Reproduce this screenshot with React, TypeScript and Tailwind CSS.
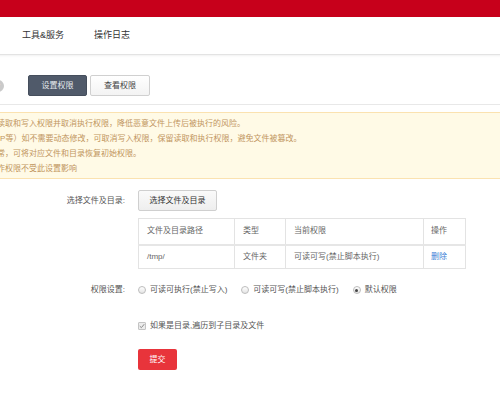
export default function App() {
  const navItems = ["安全", "工具&服务", "操作日志"]
  const tips = [
    "建议设置为读取和写入权限并取消执行权限，降低恶意文件上传后被执行的风险。",
    "脚本（如PHP等）如不需要动态修改，可取消写入权限，保留读取和执行权限，避免文件被篡改。",
    "修改后若异常，可将对应文件和目录恢复初始权限。",
    "系统文件操作权限不受此设置影响",
  ]
  const radios = [
    { label: "可读可执行(禁止写入)", checked: false },
    { label: "可读可写(禁止脚本执行)", checked: false },
    { label: "默认权限", checked: true },
  ]

  return (
    <div className="w-[500px] h-[400px] overflow-hidden bg-white font-['Liberation_Sans','Noto_Sans_CJK_SC',sans-serif]">
      {/* page is scrolled right: left part off-screen */}
      <div className="-ml-[100px] w-[700px]">
        <div className="h-[17px] bg-[#c7001b]" />

        <nav className="h-[38px] flex items-center pl-[59px] text-[9px] text-[#333] border-b border-[#e3e3e3] shadow-[0_1px_2px_rgba(0,0,0,0.06)]">
          {navItems.map((n) => (
            <span key={n} className="px-[15px]">{n}</span>
          ))}
        </nav>

        <div className="flex items-center pl-[40px] pt-[20px] pb-[8px] border-b border-[#e8e8e8]">
          <span className="w-[48px] text-[8px] text-[#555]">目录权限</span>
          <span className="ml-[4px] w-[12px] h-[12px] rounded-full bg-[#cacaca] text-white text-[8px] font-bold flex items-center justify-center">?</span>
          <button className="ml-[24px] w-[59px] h-[21px] rounded-[2px] bg-[#505a6a] border border-[#454e5c] text-[8px] text-[#e6e9ee]">
            设置权限
          </button>
          <button className="ml-[3px] w-[60px] h-[21px] rounded-[2px] bg-gradient-to-b from-white to-[#f3f3f3] border border-[#d0d0d0] text-[8px] text-[#444]">
            查看权限
          </button>
        </div>

        <div className="mt-[7px] ml-[40px] w-[580px] border border-[#fbe2b0] bg-[#fffae6] pl-[16px] pt-[3px] pb-[2px] text-[8px] leading-[15px] text-[#bf955e]">
          {tips.map((t) => (
            <div key={t} className="whitespace-nowrap">{t}</div>
          ))}
        </div>

        <div className="mt-[11px] text-[8px] text-[#555]">
          <div className="flex items-start">
            <div className="w-[225px] h-[21px] leading-[21px] text-right">选择文件及目录:</div>
            <div className="ml-[13px]">
              <button className="w-[79px] h-[21px] rounded-[2px] bg-gradient-to-b from-[#fafafa] to-[#eeeeee] border border-[#cfcfcf] text-[8px] text-[#333]">
                选择文件及目录
              </button>
              <table className="mt-[7px] w-[327px] table-fixed border-collapse border border-[#e3e3e3] text-[#666]">
                <colgroup>
                  <col className="w-[96px]" />
                  <col className="w-[51px]" />
                  <col className="w-[138px]" />
                  <col className="w-[42px]" />
                </colgroup>
                <thead>
                  <tr className="h-[26px] border-b-2 border-[#e6e6e6]">
                    <th className="font-normal text-left pl-[8px] border-r border-[#e3e3e3]">文件及目录路径</th>
                    <th className="font-normal text-left pl-[8px] border-r border-[#e3e3e3]">类型</th>
                    <th className="font-normal text-left pl-[8px] border-r border-[#e3e3e3]">当前权限</th>
                    <th className="font-normal text-left pl-[7px]">操作</th>
                  </tr>
                </thead>
                <tbody>
                  <tr className="h-[24px]">
                    <td className="pl-[8px] border-r border-[#e3e3e3]">/tmp/</td>
                    <td className="pl-[8px] border-r border-[#e3e3e3]">文件夹</td>
                    <td className="pl-[8px] border-r border-[#e3e3e3]">可读可写(禁止脚本执行)</td>
                    <td className="pl-[7px] text-[#3b7fd6]">删除</td>
                  </tr>
                </tbody>
              </table>
            </div>
          </div>

          <div className="flex items-center h-[16px] mt-[13px]">
            <div className="w-[225px] text-right">权限设置:</div>
            <div className="ml-[13px] flex items-center">
              {radios.map((r) => (
                <label key={r.label} className="flex items-center mr-[14px]">
                  <span className="w-[8px] h-[8px] rounded-full border border-[#bdbdbd] bg-gradient-to-b from-white to-[#e4e4e4] flex items-center justify-center">
                    {r.checked && <span className="w-[3px] h-[3px] rounded-full bg-[#444]" />}
                  </span>
                  <span className="ml-[4px]">{r.label}</span>
                </label>
              ))}
            </div>
          </div>

          <div className="flex items-center h-[16px] mt-[20px]">
            <div className="w-[225px]" />
            <div className="ml-[13px] flex items-center">
              <span className="w-[8px] h-[8px] rounded-[1px] border border-[#c4c4c4] bg-[#ececec] flex items-center justify-center">
                <svg viewBox="0 0 8 8" className="w-[6px] h-[6px]">
                  <path d="M1 4.2 L3.2 6.2 L7 1.6" fill="none" stroke="#888" strokeWidth="1.3" />
                </svg>
              </span>
              <span className="ml-[4px]">如果是目录,遍历到子目录及文件</span>
            </div>
          </div>

          <div className="flex mt-[15px]">
            <div className="w-[225px]" />
            <button className="ml-[13px] w-[39px] h-[21px] rounded-[2px] bg-[#e8343b] text-white text-[8px]">提交</button>
          </div>
        </div>
      </div>
    </div>
  )
}
